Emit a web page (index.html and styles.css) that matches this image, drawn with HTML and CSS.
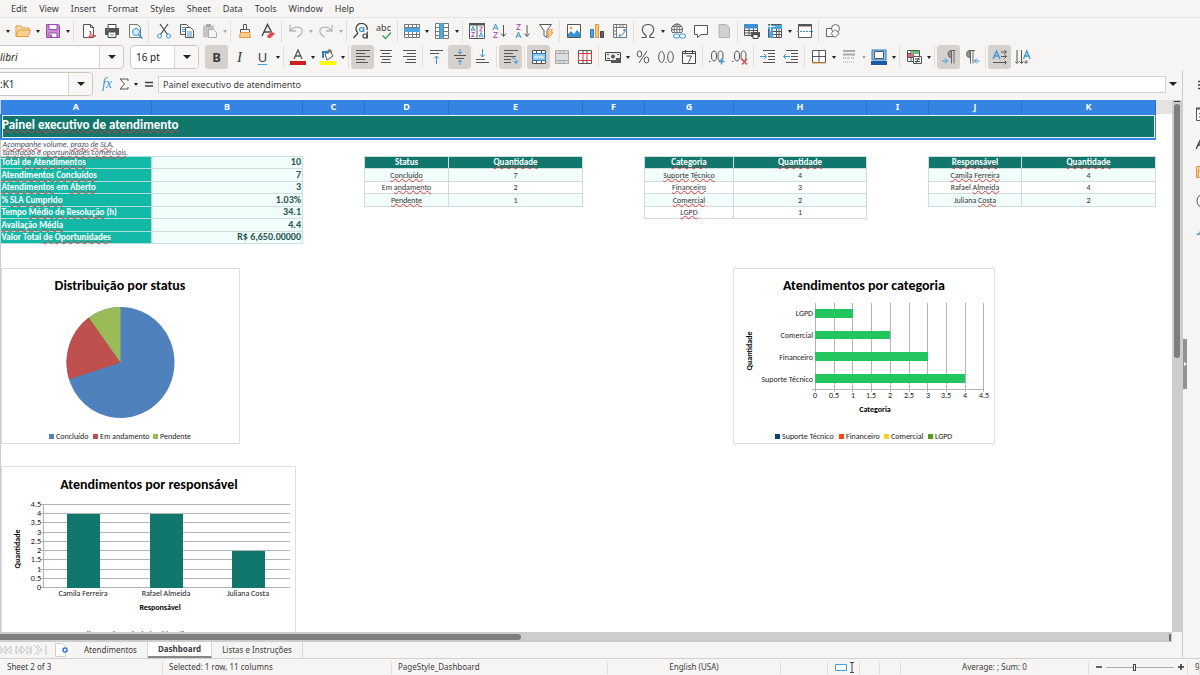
FILE: index.html
```html
<!DOCTYPE html>
<html lang="pt-BR">
<head>
<meta charset="utf-8">
<title>Dashboard</title>
<link rel="stylesheet" href="styles.css">
</head>
<body>
<div class="app">
<nav class="menubar">
<button>Edit</button><button>View</button><button>Insert</button><button>Format</button><button>Styles</button><button>Sheet</button><button>Data</button><button>Tools</button><button>Window</button><button>Help</button>
</nav>

<div class="toolbar standard">
<button class="drop" aria-label="New options"></button>
<button class="tool" aria-label="Open"><svg viewBox="0 0 16 16"><path d="M1 13V3h5l2 2h6v2" fill="#fde0b0" stroke="#e8973c"/><path d="M1 13.500l2.500-6.500h12L13 13.500z" fill="#fbd08f" stroke="#e8973c"/></svg></button>
<button class="drop" aria-label="Open options"></button>
<button class="tool" aria-label="Save"><svg viewBox="0 0 16 16"><path d="M1.500 1.500h12l1 1v12h-13z" fill="#cd8bd8" stroke="#9a4aaa"/><path d="M4 1.500h8v5H4zM4 10h8v4.500H4z" fill="#fff" stroke="#9a4aaa"/><path d="M6 11.500v3" stroke="#9a4aaa" stroke-width="2"/></svg></button>
<button class="drop" aria-label="Save options"></button>
<i class="sep"></i>
<button class="tool" aria-label="Export as PDF"><svg viewBox="0 0 16 16"><path d="M2.500 1.500h7l3 3v10h-10zM9.500 1.500v3h3" fill="#fff" stroke="#555"/><path d="M7 15c3-3 3-5 2-7 1 4 3 5 6 5-3-.5-6 .5-8 2z" fill="#fff" stroke="#d9393e"/></svg></button>
<button class="tool" aria-label="Print"><svg viewBox="0 0 16 16"><path d="M4 5V1.500h8V5" fill="#fff" stroke="#444"/><path d="M1 5h14v7H1z" fill="#555"/><path d="M4 9h8v5.500H4z" fill="#fff" stroke="#444"/><path d="M3 7h2M6 12h4" stroke="#48a0d8"/></svg></button>
<button class="tool" aria-label="Print preview"><svg viewBox="0 0 16 16"><path d="M2.500 1.500h8l3 3v10h-11z" fill="#fff" stroke="#777"/><circle cx="9" cy="9" r="3.500" fill="#d8ecfa" stroke="#3a94d4"/><path d="M11.500 11.500l4 4" stroke="#3a94d4" stroke-width="1.500"/></svg></button>
<i class="sep"></i>
<button class="tool" aria-label="Cut"><svg viewBox="0 0 16 16"><path d="M4 1l7.500 10.500M12 1L4.500 11.500" stroke="#444" fill="none" stroke-width="1.200"/><circle cx="3.500" cy="13" r="2" fill="none" stroke="#3a94d4"/><circle cx="12.500" cy="13" r="2" fill="none" stroke="#3a94d4"/></svg></button>
<button class="tool" aria-label="Copy"><svg viewBox="0 0 16 16"><path d="M1.500 1.500h6l2 2v8h-8z" fill="#fff" stroke="#555"/><path d="M6.500 4.500h5l3 3v7h-8z" fill="#fff" stroke="#555"/><path d="M3 4.500h3M3 6.500h3M3 8.500h3M8 9h5M8 11h5M8 13h5" stroke="#3a94d4"/></svg></button>
<button class="tool" aria-label="Paste" disabled><svg viewBox="0 0 16 16"><path d="M1 2.500h11v12H1z" fill="#c4c4c4"/><path d="M4 1h5v3H4z" fill="#aaa"/><path d="M6.500 6.500h5l3 3v5h-8z" fill="#f4f4f4" stroke="#aaa"/></svg></button>
<button class="drop faded" aria-label="Paste options" disabled></button>
<i class="sep"></i>
<button class="tool" aria-label="Clone formatting"><svg viewBox="0 0 16 16"><path d="M6.500 1.500h3v5h-3z" fill="#fff" stroke="#555"/><path d="M3.500 6.500h9v3h-9z" fill="#fff" stroke="#555"/><path d="M3.500 9.500h9l1 5h-11z" fill="#fbd08f" stroke="#e8973c"/></svg></button>
<button class="tool" aria-label="Clear formatting"><svg viewBox="0 0 16 16"><path d="M2 13L7.500 1.500 12 10M4 9h6" fill="none" stroke="#444" stroke-width="1.400"/><path d="M7 13l4-4 4 1.500-4.500 4.500H8z" fill="#e2474c"/></svg></button>
<i class="sep"></i>
<button class="tool" aria-label="Undo" disabled><svg viewBox="0 0 16 16"><path d="M2 2v6h6M2.500 7.500C6 3 13 3 14 7c1 3-2 6-5 7" fill="none" stroke="#b8b8b8" stroke-width="1.300"/></svg></button>
<button class="drop faded" aria-label="Undo options" disabled></button>
<button class="tool" aria-label="Redo" disabled><svg viewBox="0 0 16 16"><path d="M14 2v6H8M13.500 7.500C10 3 3 3 2 7c-1 3 2 6 5 7" fill="none" stroke="#b8b8b8" stroke-width="1.300"/></svg></button>
<button class="drop faded" aria-label="Redo options" disabled></button>
<i class="sep"></i>
<button class="tool" aria-label="Find and replace"><svg viewBox="0 0 16 16"><path d="M5 10A5.500 5.500 0 1 1 14 7M5 10l-4.500 5" fill="none" stroke="#444" stroke-width="1.300"/><circle cx="8.500" cy="6.500" r="2" fill="none" stroke="#3a94d4" stroke-width="1.200"/><path d="M10.700 4v5" stroke="#3a94d4" stroke-width="1.200"/><circle cx="12" cy="13" r="2" fill="none" stroke="#444" stroke-width="1.200"/><path d="M14.300 8.500V15.500" stroke="#444" stroke-width="1.200"/></svg></button>
<button class="tool spell" aria-label="Spelling"><span>abc</span><svg viewBox="0 0 16 8"><path d="M6.500 3.500l3 3 5.500-6" fill="none" stroke="#3aa65c" stroke-width="1.400"/></svg></button>
<i class="sep"></i>
<button class="tool" aria-label="Row"><svg viewBox="0 0 16 16"><path d="M.5 1.500h15v13H.5zM.5 4.500h15M.5 8.500h15M.5 11.500h15M4.500 1.500v13M8.500 1.500v13M12.500 1.500v13" fill="#fff" stroke="#777"/><path d="M0 5h16v4H0z" fill="#4ba7e4"/></svg></button>
<button class="drop" aria-label="Row options"></button>
<button class="tool" aria-label="Column"><svg viewBox="0 0 16 16"><path d="M1.500.5h13v15h-13zM1.500 4.500h13M1.500 8.500h13M1.500 12.500h13M5.500.5v15M9.500.5v15" fill="#fff" stroke="#777"/><path d="M5.500 0h4v16h-4z" fill="#4ba7e4"/></svg></button>
<button class="drop" aria-label="Column options"></button>
<i class="sep"></i>
<button class="tool" aria-label="Sort"><svg viewBox="0 0 16 16"><path d="M.5.5h15v15H.5zM8 2v14" fill="#fff" stroke="#555"/><path d="M0 0h16v2.500H0z" fill="#555"/><path d="M2 8l2-4.500L6 8M2.500 7h3M10 14l2-4.500 2 4.500M10.500 13h3" fill="none" stroke="#3a94d4"/><path d="M2.500 9.500h3l-3 4h3M10.500 4h3l-3 4h3" fill="none" stroke="#b04fc0"/></svg></button>
<button class="tool" aria-label="Sort ascending"><svg viewBox="0 0 16 16"><path d="M1 7l2.500-6L6 7M2 5h3" fill="none" stroke="#3a94d4"/><path d="M1.500 9.500h4l-4 5h4" fill="none" stroke="#b04fc0"/><path d="M11.500 2v11M9 10.500l2.500 3 2.500-3" fill="none" stroke="#555"/></svg></button>
<button class="tool" aria-label="Sort descending"><svg viewBox="0 0 16 16"><path d="M1.500 1.500h4l-4 5h4" fill="none" stroke="#b04fc0"/><path d="M1 15l2.500-6L6 15M2 13h3" fill="none" stroke="#3a94d4"/><path d="M12 2v11M9.500 10.500l2.500 3 2.500-3" fill="none" stroke="#555"/></svg></button>
<button class="tool" aria-label="AutoFilter"><svg viewBox="0 0 16 16"><path d="M1.500 1.500h12l-4.500 6v7l-3-2v-5z" fill="#fff" stroke="#555"/><path d="M11.500 6.500h3l-1.500 3h2l-5 6 1-4.500H9z" fill="#fbd08f" stroke="#e8973c" stroke-width=".8"/></svg></button>
<i class="sep"></i>
<button class="tool" aria-label="Insert image"><svg viewBox="0 0 16 16"><path d="M1.500 1.500h13v13h-13z" fill="#fff" stroke="#555"/><path d="M2 14V11l3-3 3 3 3-4 3.500 3.500V14z" fill="#3a94d4"/><circle cx="5" cy="5" r="1.300" fill="#f0a040"/></svg></button>
<button class="tool" aria-label="Insert chart"><svg viewBox="0 0 16 16"><path d="M1.500 6.500h3v8h-3z" fill="#4ba7e4" stroke="#2b7fc0"/><path d="M6.500 1.500h3v13h-3z" fill="#fbc678" stroke="#e8973c"/><path d="M11.500 8.500h3v6h-3z" fill="#666" stroke="#444"/></svg></button>
<button class="tool" aria-label="Insert pivot table"><svg viewBox="0 0 16 16"><path d="M1.500 1.500h13v13h-13zM1.500 4.500h13M4.500 1.500v13M8 1.500v3M11 1.500v3M1.500 8h3M1.500 11h3" fill="#fff" stroke="#777"/><path d="M7 12.500c4 0 5.500-2 5.500-6M11 8l1.500-2L14 8M8.500 11L7 12.500 8.500 14" fill="none" stroke="#3a94d4"/></svg></button>
<i class="sep"></i>
<button class="tool" aria-label="Special character"><svg viewBox="0 0 16 16"><path d="M1.500 14.500H6v-2C0 8 2 1.500 8 1.500S16 8 10 12.500v2h4.500" fill="none" stroke="#555" stroke-width="1.200"/></svg></button>
<button class="drop" aria-label="Character options"></button>
<button class="tool" aria-label="Insert hyperlink"><svg viewBox="0 0 16 16"><circle cx="7" cy="6.500" r="5.500" fill="none" stroke="#555"/><path d="M7 1v11M1.500 6.500h11M2.500 3.500h9M2.500 9.500h9" stroke="#777"/><ellipse cx="7" cy="6.500" rx="2.800" ry="5.500" fill="none" stroke="#777"/><path d="M3 10h13v6H3z" fill="#f6f5f4"/><rect x="3.500" y="11" width="6" height="4" rx="2" fill="none" stroke="#3a94d4"/><rect x="9.500" y="11" width="6" height="4" rx="2" fill="none" stroke="#3a94d4"/></svg></button>
<button class="tool" aria-label="Insert comment"><svg viewBox="0 0 16 16"><path d="M1.500 2.500h13v9H8l-3.500 3v-3h-3z" fill="#fff" stroke="#555"/></svg></button>
<button class="tool" aria-label="Headers and footers" disabled><svg viewBox="0 0 16 16"><path d="M3 1.500h7l3.500 3v10H3z" fill="#d0d0d0" stroke="#b4b4b4"/></svg></button>
<i class="sep"></i>
<button class="tool" aria-label="Define print area"><svg viewBox="0 0 16 16"><path d="M.5 1.500h13v11H.5zM.5 7.500h13M.5 10h13M5 1.500v11M9.500 1.500v11" fill="#fff" stroke="#555"/><path d="M0 1h14v4.500H0z" fill="#3a94d4"/><path d="M7 9h9v5H7z" fill="#555"/><path d="M9 11.500h5v4H9z" fill="#fff" stroke="#444"/></svg></button>
<button class="tool" aria-label="Freeze rows and columns"><svg viewBox="0 0 16 16"><path d="M1.500 1.500h13v13h-13zM1.500 8.500h13M1.500 11.500h13M9.500 1.500v13M12 1.500v13" fill="#fff" stroke="#555"/><path d="M1 2h14v4H1zM2 2h4v13H2z" fill="#4ba7e4"/><path d="M0 3.500h8M3.500 0v8" stroke="#fff" stroke-width=".8"/></svg></button>
<button class="drop" aria-label="Freeze options"></button>
<button class="tool" aria-label="Split window"><svg viewBox="0 0 16 16"><path d="M1.500 1.500h13v13h-13z" fill="#fff" stroke="#555"/><path d="M1 1h14v2.500H1z" fill="#555"/><path d="M0 8.500h16" stroke="#3a94d4" stroke-dasharray="2 1"/></svg></button>
<i class="sep"></i>
<button class="tool" aria-label="Show draw functions"><svg viewBox="0 0 16 16"><path d="M1.500 5.500h8v8h-8z" fill="#fff" stroke="#666"/><circle cx="10.500" cy="5.500" r="4" fill="#fff" stroke="#666"/><path d="M10 6.500l4 4-4 4-4-4z" fill="#fff" stroke="#666"/></svg></button>
</div>

<div class="toolbar formatting">
<div class="combo font"><input aria-label="Font name" value="libri"><button aria-label="Choose font"></button></div>
<div class="combo size"><input aria-label="Font size" value="16 pt"><button aria-label="Choose size"></button></div>
<button class="tool on" aria-label="Bold"><b>B</b></button>
<button class="tool italic" aria-label="Italic"><i>I</i></button>
<button class="tool" aria-label="Underline"><u>U</u></button>
<button class="drop" aria-label="Underline options"></button>
<i class="sep"></i>
<button class="tool" aria-label="Font color"><svg viewBox="0 0 16 16"><path d="M4 10l4-9 4 9M5.500 7h5" fill="none" stroke="#555" stroke-width="1.300"/><path d="M0 12h16v4H0z" fill="#c9211e"/></svg></button>
<button class="drop" aria-label="Font color options"></button>
<button class="tool" aria-label="Highlighting"><svg viewBox="0 0 16 16"><path d="M5 5l5-3 3 5-6 4z" fill="#fff" stroke="#555"/><path d="M8 5V1h3v3" fill="none" stroke="#555"/><path d="M3 9V3h4" fill="none" stroke="#2b7fc0" stroke-width="2"/><path d="M0 12h16v4H0z" fill="#ffff00"/></svg></button>
<button class="drop" aria-label="Highlighting options"></button>
<i class="sep"></i>
<button class="tool on" aria-label="Align left"><svg viewBox="0 0 16 16"><path d="M1 1.500h14M1 4.500h9M1 7.500h14M1 10.500h9M1 13.500h12" stroke="#555"/></svg></button>
<button class="tool" aria-label="Center"><svg viewBox="0 0 16 16"><path d="M2 1.500h12M4 4.500h8M2 7.500h12M4 10.500h8M3 13.500h10" stroke="#555"/></svg></button>
<button class="tool" aria-label="Align right"><svg viewBox="0 0 16 16"><path d="M2 1.500h13M6 4.500h9M2 7.500h13M6 10.500h9M4 13.500h11" stroke="#555"/></svg></button>
<i class="sep"></i>
<button class="tool" aria-label="Align top"><svg viewBox="0 0 16 16"><path d="M1 1.500h13M1 4.500h9" stroke="#555"/><path d="M7.500 15V7M5 9.500L7.500 7l2.500 2.500" fill="none" stroke="#3a94d4"/></svg></button>
<button class="tool on" aria-label="Center vertically"><svg viewBox="0 0 16 16"><path d="M2 6.500h12M4 9.500h8" stroke="#555"/><path d="M8 0v5M6 3l2 2 2-2M8 16v-5M6 13l2-2 2 2" fill="none" stroke="#3a94d4"/></svg></button>
<button class="tool" aria-label="Align bottom"><svg viewBox="0 0 16 16"><path d="M1 10.500h9M1 13.500h13" stroke="#555"/><path d="M7.500 0v8M5 5.500L7.500 8 10 5.500" fill="none" stroke="#3a94d4"/></svg></button>
<i class="sep"></i>
<button class="tool on" aria-label="Wrap text"><svg viewBox="0 0 16 16"><path d="M1 1.500h14M1 4.500h9M1 7.500h12M1 10.500h7M1 13.500h7" stroke="#555"/><path d="M9 9c3 0 4 1 4 5M10.500 12l2.500 2.500 2-3" fill="none" stroke="#3a94d4"/></svg></button>
<i class="sep"></i>
<button class="tool on" aria-label="Merge and center"><svg viewBox="0 0 16 16"><path d="M1.500 1.500h13v13h-13zM1.500 4.500h13M1.500 11.500h13M5.500 1.500v3M10.500 1.500v3M5.500 11.500v3M10.500 11.500v3" fill="#fff" stroke="#555"/><path d="M1.500 4.500h13v7h-13z" fill="#8cc8f0" stroke="#2b7fc0"/><path d="M3.500 8h9M5.500 6.500L4 8l1.500 1.500M10.500 6.500L12 8l-1.500 1.500" fill="none" stroke="#fff"/></svg></button>
<button class="tool" aria-label="Merge cells" disabled><svg viewBox="0 0 16 16"><path d="M1.500 1.500h13v13h-13zM1.500 4.500h13M1.500 11.500h13M6 1.500v3M10 1.500v3M6 11.500v3M10 11.500v3" fill="#ddd" stroke="#aaa"/></svg></button>
<button class="tool" aria-label="Unmerge cells"><svg viewBox="0 0 16 16"><path d="M1.500 1.500h13v13h-13zM1.500 4.500h13M1.500 11.500h13M6 1.500v3M10 1.500v3M6 11.500v3M10 11.500v3" fill="#fff" stroke="#555"/><path d="M1.500 4.500h13v7h-13zM6 4.500v7M10 4.500v7" fill="#fff" stroke="#d9393e"/></svg></button>
<i class="sep"></i>
<button class="tool" aria-label="Format as currency"><svg viewBox="0 0 16 16"><path d="M.5 3.500h15v8H.5z" fill="#eee" stroke="#444"/><circle cx="8" cy="7.500" r="2" fill="#555"/><path d="M2 5.500h2M12 5.500h2M2 9.500h3" stroke="#555"/><path d="M6 11h5v3H6zM11 9h5v5h-5z" fill="#555"/></svg></button>
<button class="drop" aria-label="Currency options"></button>
<button class="tool" aria-label="Format as percent"><svg viewBox="0 0 16 16"><ellipse cx="4.500" cy="5" rx="2.300" ry="3" fill="none" stroke="#555"/><ellipse cx="11.500" cy="11" rx="2.300" ry="3" fill="none" stroke="#555"/><path d="M12 2L4 14" stroke="#555"/></svg></button>
<button class="tool" aria-label="Format as number"><svg viewBox="0 0 16 16"><ellipse cx="3.500" cy="8" rx="2.800" ry="5.500" fill="none" stroke="#555"/><ellipse cx="12.500" cy="8" rx="2.800" ry="5.500" fill="none" stroke="#555"/><path d="M7.500 13.500h1" stroke="#555"/></svg></button>
<button class="tool" aria-label="Format as date"><svg viewBox="0 0 16 16"><path d="M1.500 2.500h13v12h-13z" fill="#fff" stroke="#444"/><path d="M1.500 4.500h13M4.500 1v3M11.500 1v3" stroke="#444"/><path d="M5.500 7h5l-3 6.500" fill="none" stroke="#444"/></svg></button>
<i class="sep"></i>
<button class="tool" aria-label="Add decimal place"><svg viewBox="0 0 16 16"><ellipse cx="5" cy="7" rx="2.500" ry="5" fill="none" stroke="#555"/><ellipse cx="11.500" cy="7" rx="2.500" ry="5" fill="none" stroke="#555"/><path d="M0 12.500h1.500" stroke="#555"/><path d="M9.500 12.500h6M12.500 9.500v6" stroke="#3a94d4" stroke-width="1.300"/></svg></button>
<button class="tool" aria-label="Delete decimal place"><svg viewBox="0 0 16 16"><ellipse cx="5" cy="7" rx="2.500" ry="5" fill="none" stroke="#555"/><ellipse cx="11.500" cy="7" rx="2.500" ry="5" fill="none" stroke="#555"/><path d="M0 12.500h1.500" stroke="#555"/><path d="M10 10l5 5.500M15 10l-5 5.500" stroke="#e2474c" stroke-width="1.300"/></svg></button>
<i class="sep"></i>
<button class="tool" aria-label="Increase indent"><svg viewBox="0 0 16 16"><path d="M3 1.500h12M8 4.500h7M8 7.500h7M8 10.500h7M3 13.500h12" stroke="#555"/><path d="M0 7.500h6M4 5l2.500 2.500L4 10" fill="none" stroke="#3a94d4"/></svg></button>
<button class="tool" aria-label="Decrease indent"><svg viewBox="0 0 16 16"><path d="M3 1.500h12M8 4.500h7M8 7.500h7M8 10.500h7M3 13.500h12" stroke="#555"/><path d="M1 7.500h6M3 5L.5 7.500 3 10" fill="none" stroke="#3a94d4"/></svg></button>
<i class="sep"></i>
<button class="tool" aria-label="Borders"><svg viewBox="0 0 16 16"><path d="M1.500 1.500h13v12h-13zM8 1.500v12M1.500 7.500h13" fill="#fff" stroke="#555"/><path d="M1 14h14" stroke="#e8973c"/></svg></button>
<button class="drop" aria-label="Border options"></button>
<button class="tool" aria-label="Border style" disabled><svg viewBox="0 0 16 16"><path d="M2 2h12M2 5.500h12" stroke="#aaa" stroke-width="2"/><path d="M2 9h12" stroke="#aaa" stroke-dasharray="3 1"/><path d="M2 13h12" stroke="#aaa" stroke-dasharray="1 1"/></svg></button>
<button class="drop faded" aria-label="Border style options" disabled></button>
<button class="tool" aria-label="Border color"><svg viewBox="0 0 16 16"><path d="M1 1h14v10H1z" fill="#8cc8f0" stroke="#2b7fc0"/><path d="M3.500 2.500h9v7h-9z" fill="#fff" stroke="#555"/><path d="M0 12h16v4H0z" fill="#1c5aa8"/></svg></button>
<button class="drop" aria-label="Border color options"></button>
<i class="sep"></i>
<button class="tool" aria-label="Conditional formatting"><svg viewBox="0 0 16 16"><path d="M1.500 1.500h12v11h-12zM1.500 4.500h12M1.500 8.500h12M5 1.500v11" fill="#fff" stroke="#555"/><path d="M5 2h8v3H5z" fill="#6cc07c"/><path d="M2 5h6v3H2z" fill="#e2676a"/><path d="M7.500 7.500h8v7h-8z" fill="#fff" stroke="#555"/><path d="M9 10h5M9 12.500h5M13 8.500L10 14" stroke="#444"/></svg></button>
<button class="drop" aria-label="Conditional options"></button>
<i class="sep"></i>
<button class="tool on" aria-label="Left-to-right"><svg viewBox="0 0 16 16"><path d="M14.500 1.500H9M10.500 1.500v13M13 1.500v13" stroke="#666"/><path d="M10.500 1.500a3.500 3.500 0 0 0 0 7z" fill="#999" stroke="#666"/><path d="M1 12h5M4 9.500L6.500 12 4 14.500" fill="none" stroke="#3a94d4"/></svg></button>
<button class="tool" aria-label="Right-to-left"><svg viewBox="0 0 16 16"><path d="M11 1.500H5M6.500 1.500v13M9 1.500v13" stroke="#666"/><path d="M6 1.500a3.500 3.500 0 0 0 0 7z" fill="#999" stroke="#666"/><path d="M10.500 12h5M13 9.500L10.500 12l2.500 2.500" fill="none" stroke="#3a94d4"/></svg></button>
<i class="sep"></i>
<button class="tool on" aria-label="Text direction left to right"><svg viewBox="0 0 16 16"><path d="M1 10l3.500-8L8 10M2 7h5" fill="none" stroke="#3a94d4" stroke-width="1.300"/><path d="M9 3h5M9 7.500h5M1 13.500h13M12.500 1l2 2-2 2M12.500 5.500l2 2-2 2M12.500 11.500l2 2-2 2" fill="none" stroke="#555"/></svg></button>
<button class="tool" aria-label="Text direction top to bottom"><svg viewBox="0 0 16 16"><path d="M8.500 10l3.300-8 3.300 8M9.500 7h5" fill="none" stroke="#3a94d4" stroke-width="1.300"/><path d="M2 1v13M6.500 1v13M11 11v3M0 12.500l2 2 2-2M4.500 12.500l2 2 2-2M9 12.500l2 2 2-2" fill="none" stroke="#555"/></svg></button>
</div>

<div class="workspace">
<main class="document">
<div class="formulabar">
<div class="combo name"><input aria-label="Name box" value=":K1"><button aria-label="Choose name"></button></div>
<button class="fx" aria-label="Function wizard"><i>fx</i></button>
<button class="sigma" aria-label="Select function"><svg viewBox="0 0 12 12"><path d="M10 3V1H2l4.500 5L2 11h8V9" fill="none" stroke="#555"/></svg></button>
<button class="drop" aria-label="Function options"></button>
<button class="equals" aria-label="Formula"><svg viewBox="0 0 12 12"><path d="M2 4.500h8M2 8h8" stroke="#444" stroke-width="1.500"/></svg></button>
<input class="formula" aria-label="Input line" value="Painel executivo de atendimento">
<button class="expand" aria-label="Expand formula bar"></button>
</div>

<div class="viewport">
<div class="sheet">
<table class="grid">
<colgroup><col class="w151"><col class="w151"><col class="w62"><col class="w84"><col class="w134"><col class="w62"><col class="w89"><col class="w133"><col class="w62"><col class="w93"><col class="w134"></colgroup>
<thead><tr><th>A</th><th>B</th><th>C</th><th>D</th><th>E</th><th>F</th><th>G</th><th>H</th><th>I</th><th>J</th><th>K</th></tr></thead>
<tbody>
<tr class="title"><td colspan="11"><s>Painel executivo de atendimento</s></td></tr>
<tr class="note"><td><s>Acompanhe</s> volume, <s>prazo</s> <s>de</s> <s>SLA</s>,<br><s>satisfação</s> e <s>oportunidades</s> <s>comerciais</s>.</td><td colspan="10"></td></tr>
<tr><td class="kpi">Total <s>de</s> <s>Atendimentos</s></td><td class="val">10</td><td></td><td class="head">Status</td><td class="head"><s>Quantidade</s></td><td></td><td class="head"><s>Categoria</s></td><td class="head"><s>Quantidade</s></td><td></td><td class="head"><s>Responsável</s></td><td class="head"><s>Quantidade</s></td></tr>
<tr><td class="kpi"><s>Atendimentos</s> <s>Concluídos</s></td><td class="val">7</td><td></td><td class="cell tint"><s>Concluído</s></td><td class="cell tint">7</td><td></td><td class="cell tint"><s>Suporte</s> <s>Técnico</s></td><td class="cell tint">4</td><td></td><td class="cell tint"><s>Camila</s> <s>Ferreira</s></td><td class="cell tint">4</td></tr>
<tr><td class="kpi"><s>Atendimentos</s> em <s>Aberto</s></td><td class="val">3</td><td></td><td class="cell">Em <s>andamento</s></td><td class="cell">2</td><td></td><td class="cell"><s>Financeiro</s></td><td class="cell">3</td><td></td><td class="cell">Rafael <s>Almeida</s></td><td class="cell">4</td></tr>
<tr><td class="kpi">% <s>SLA</s> <s>Cumprido</s></td><td class="val">1.03%</td><td></td><td class="cell tint"><s>Pendente</s></td><td class="cell tint">1</td><td></td><td class="cell tint"><s>Comercial</s></td><td class="cell tint">2</td><td></td><td class="cell tint">Juliana <s>Costa</s></td><td class="cell tint">2</td></tr>
<tr><td class="kpi">Tempo <s>Médio</s> <s>de</s> <s>Resolução</s> (h)</td><td class="val">34.1</td><td colspan="4"></td><td class="cell"><s>LGPD</s></td><td class="cell">1</td><td colspan="3"></td></tr>
<tr><td class="kpi"><s>Avaliação</s> <s>Média</s></td><td class="val">4.4</td><td colspan="9"></td></tr>
<tr><td class="kpi">Valor Total <s>de</s> <s>Oportunidades</s></td><td class="val">R$ 6,650.00000</td><td colspan="9"></td></tr>
</tbody>
</table>

<svg class="chart status" width="239" height="176" viewBox="0 0 239 176" role="img" aria-label="Distribuição por status">
<rect class="frame" x=".5" y=".5" width="238" height="175"/>
<text class="heading" x="119" y="22">Distribuição por status</text>
<ellipse cx="119.500" cy="94.500" rx="54" ry="55.500" fill="#4f81bd"/>
<path d="M119.500 94.500L68.100 111.600A54 55.500 0 0 1 87.800 49.600z" fill="#c0504d"/>
<path d="M119.500 94.500L87.800 49.600A54 55.500 0 0 1 119.500 39z" fill="#9bbb59"/>
<path d="M48 166h5v5h-5z" fill="#4f81bd"/><text x="55" y="171">Concluído</text>
<path d="M92 166h5v5h-5z" fill="#c0504d"/><text x="99" y="171">Em andamento</text>
<path d="M152 166h5v5h-5z" fill="#9bbb59"/><text x="159" y="171">Pendente</text>
</svg>

<svg class="chart category" width="262" height="176" viewBox="0 0 262 176" role="img" aria-label="Atendimentos por categoria">
<rect class="frame" x=".5" y=".5" width="261" height="175"/>
<text class="heading" x="131" y="22">Atendimentos por categoria</text>
<path class="rule" d="M82.500 35v89M101.500 35v89M119.500 35v89M138.500 35v89M157.500 35v89M176.500 35v89M194.500 35v89M213.500 35v89M232.500 35v89M250.500 35v89M79 121.500h172"/>
<path d="M82 41h38v9H82zM82 63h75v8H82zM82 84h113v9H82zM82 106h150v9H82z" fill="#22c55e"/>
<g class="end"><text x="80" y="48">LGPD</text><text x="80" y="70">Comercial</text><text x="80" y="92">Financeiro</text><text x="80" y="114">Suporte Técnico</text></g>
<g class="mid"><text x="82" y="130">0</text><text x="101" y="130">0.5</text><text x="120" y="130">1</text><text x="138" y="130">1.5</text><text x="157" y="130">2</text><text x="176" y="130">2.5</text><text x="195" y="130">3</text><text x="213" y="130">3.5</text><text x="232" y="130">4</text><text x="251" y="130">4.5</text></g>
<text class="axis" x="142" y="144">Categoria</text>
<text class="axis" transform="translate(19 83) rotate(-90)">Quantidade</text>
<path d="M42 166h5v5h-5z" fill="#004586"/><text x="49" y="171">Suporte Técnico</text>
<path d="M106 166h5v5h-5z" fill="#ff420e"/><text x="113" y="171">Financeiro</text>
<path d="M151 166h5v5h-5z" fill="#ffd320"/><text x="158" y="171">Comercial</text>
<path d="M195 166h5v5h-5z" fill="#579d1c"/><text x="202" y="171">LGPD</text>
</svg>

<svg class="chart owner" width="296" height="190" viewBox="0 0 296 190" role="img" aria-label="Atendimentos por responsável">
<rect class="frame" x=".5" y=".5" width="294" height="189"/>
<text class="heading" x="148" y="23">Atendimentos por responsável</text>
<path class="rule" d="M39 38.500h250M39 47.500h250M39 56.500h250M39 66.500h250M39 75.500h250M39 84.500h250M39 93.500h250M39 103.500h250M39 112.500h250M39 121.500h250M42.500 38v83"/>
<path d="M66 48h33v74H66zM149 48h33v74h-33zM231 85h33v37h-33z" fill="#11776d"/>
<g class="end"><text x="40" y="41">4.5</text><text x="40" y="50">4</text><text x="40" y="59">3.5</text><text x="40" y="69">3</text><text x="40" y="78">2.5</text><text x="40" y="87">2</text><text x="40" y="96">1.5</text><text x="40" y="106">1</text><text x="40" y="115">0.5</text><text x="40" y="124">0</text></g>
<g class="mid"><text x="82" y="130">Camila Ferreira</text><text x="165" y="130">Rafael Almeida</text><text x="247" y="130">Juliana Costa</text></g>
<text class="axis" x="159" y="144">Responsável</text>
<text class="axis" transform="translate(19 83) rotate(-90)">Quantidade</text>
<g class="mid"><text x="143" y="171">Camila Ferreira  Rafael Almeida  Juliana Costa</text></g>
</svg>
</div>
<div class="vscroll"><div class="vthumb"></div></div>
</div>
<div class="hscroll"><div class="hthumb"></div><div class="hend"></div></div>
<div class="tabs">
<svg class="nav" viewBox="0 0 50 12"><path d="M1 2v8M6 2L2 6l4 4zM11 2L7 6l4 4zM16 2l4 4-4 4zM21 2l4 4-4 4zM27 2l4 4-4 4zM31 2v8M34 1l5 5-5 5M37 1l5 5-5 5M46 1v10" fill="none" stroke="#c8c6c4"/></svg>
<button class="add" aria-label="Add sheet"><svg viewBox="0 0 14 14"><path d="M.5.500h7l3 3v10H.5z" fill="#fff" stroke="#d0d0d0"/><circle cx="10" cy="7" r="2" fill="#fff" stroke="#2f78c8" stroke-width="1.500"/></svg></button>
<button class="tab">Atendimentos</button><button class="tab current">Dashboard</button><button class="tab">Listas e Instruções</button>
</div>
</main>
<aside class="sidebar">
<button class="handle" aria-label="Hide sidebar"></button>
<button aria-label="Settings"><svg viewBox="0 0 16 16"><path d="M2 4.500h14M2 8h14M2 11.500h14" stroke="#444" stroke-width="1.500"/></svg></button>
<button aria-label="Properties"><svg viewBox="0 0 16 16"><path d="M.5 2.500h15v12H.5zM3 7.500h10M3 11h10" fill="#fff" stroke="#555"/><path d="M0 1.500h16v2H0z" fill="#555"/></svg></button>
<button aria-label="Styles"><svg viewBox="0 0 16 16"><path d="M0 14L6 2l6 12M2 10h8" fill="none" stroke="#444" stroke-width="1.500"/></svg></button>
<button aria-label="Gallery"><svg viewBox="0 0 16 16"><path d="M.5 2.500h15v11H.5z" fill="#fbd08f" stroke="#e8973c"/><path d="M2.500 6.500h12v7h-12z" fill="#fff" stroke="#e8973c"/></svg></button>
<button aria-label="Navigator"><svg viewBox="0 0 16 16"><circle cx="8" cy="8" r="7" fill="#fff" stroke="#555"/><path d="M4 12l3-5 5-3-3 5z" fill="none" stroke="#555"/></svg></button>
<button aria-label="Functions"><svg viewBox="0 0 16 16"><path d="M1 12c3 1 3-1 4-4" fill="none" stroke="#3a94d4" stroke-width="1.500"/></svg></button>
</aside>
</div>

<footer class="statusbar">
<span class="count">Sheet 2 of 3</span><span class="selection">Selected: 1 row, 11 columns</span><span class="page">PageStyle_Dashboard</span><span class="lang">English (USA)</span><span class="insert"></span>
<span class="mode"><svg viewBox="0 0 22 12"><path d="M1.500 3.500h11v6h-11z" fill="#fff" stroke="#48a0d0"/><path d="M16 1.500h4M18 1.500v10M16 11.500h4" stroke="#444"/></svg></span><span class="sign"></span><span class="blank"></span>
<span class="sum">Average: ; Sum: 0</span>
<span class="zoom"><button aria-label="Zoom out"><svg viewBox="0 0 8 8"><path d="M1 4h6" stroke="#333" stroke-width="1.500"/></svg></button><input type="range" aria-label="Zoom" min="0" max="100" value="42"><button aria-label="Zoom in"><svg viewBox="0 0 8 8"><path d="M1 4h6M4 1v6" stroke="#333" stroke-width="1.500"/></svg></button></span>
<span class="percent">9</span>
</footer>
</div>
</body>
</html>
```
FILE: styles.css
```css
* { box-sizing: border-box; }
body { margin: 0; background: #f6f5f4; color: #3c3c3c; font: 9px/12px "Noto Sans", "Open Sans", sans-serif; }
button, input { margin: 0; padding: 0; border: 0; background: none; color: inherit; font: inherit; }
button { display: flex; flex: none; align-items: center; justify-content: center; }
svg { display: block; flex: none; }
.app { display: flex; flex-direction: column; height: 100vh; overflow: hidden; }

.menubar { display: flex; flex: none; height: 18px; padding-left: 11px; gap: 12px; border-bottom: 1px solid #e6e4e2; }

.toolbar { display: flex; flex: none; align-items: center; }
.standard { height: 26px; padding-left: 4px; }
.formatting { height: 26px; }
.tool { width: 23px; height: 24px; border-radius: 3px; font-size: 13px; }
.tool svg { width: 16px; height: 16px; }
.tool.on { background: #d5d1cd; }
.tool u { text-decoration-color: #48a0d8; text-underline-offset: 2px; }
.italic { font-family: "Liberation Serif", serif; font-size: 15px; }
.tool.spell { flex-direction: column; font-size: 9px; line-height: 9px; }
.spell svg { height: 8px; }
.sep { flex: none; width: 1px; height: 22px; margin: 0 2px; background: #e2e0de; }
.drop { width: 7px; height: 16px; }
.drop::before, .combo button::before, .expand::before { content: ""; border: 3px solid transparent; border-top: 3px solid #222; border-bottom: 0; }
.drop::before { border-left-width: 2px; border-right-width: 2px; }
.faded { opacity: .35; }
.standard .sep:nth-of-type(-n+2) { margin-right: 3px; }

.combo { display: flex; flex: none; height: 24px; border: 1px solid #cdc7c2; border-radius: 0 4px 4px 0; background: #fff; font-size: 10px; }
.combo input { flex: 1; min-width: 0; color: #222; }
.combo button { width: 24px; border-left: 1px solid #d8d4d0; border-radius: 0 3px 3px 0; background: #f8f7f6; }
.combo button::before { border-width: 4px 4px 0; }
.font { width: 124px; border-left: 0; font-style: italic; }
.size { width: 69px; margin: 0 6px; border-radius: 4px; }
.size input { padding-left: 5px; }

.workspace { display: flex; flex: 1; min-height: 0; }
.document { display: flex; flex: 1; flex-direction: column; min-width: 0; }
.formulabar { display: flex; flex: none; align-items: center; height: 30px; padding: 0 5px 2px 0; }
.name { width: 93px; border-left: 0; }
.fx { width: 18px; margin-left: 5px; color: #3a94d4; font: 14px "Liberation Serif", serif; }
.sigma { width: 16px; }
.sigma svg, .equals svg { width: 12px; height: 12px; }
.equals { width: 19px; }
.formula { flex: 1; height: 17px; padding-left: 4px; border: 1px solid #d5d0cc; background: #fff; }
.expand { width: 9px; margin-left: 2px; }
.expand::before { border-width: 4px 4px 0; }

.viewport { display: flex; flex: 1; min-height: 0; }
.sheet { position: relative; flex: 1; overflow: hidden; background: linear-gradient(90deg, #ccc 1px, transparent 1px), linear-gradient(#e4e3e2 14px, #fff 14px); font-family: Carlito, Lato, sans-serif; font-size: 8px; }
.grid { width: 1155px; border-collapse: collapse; table-layout: fixed; line-height: 10px; }
.w62 { width: 62px; } .w84 { width: 84px; } .w89 { width: 89px; } .w93 { width: 93px; }
.w133 { width: 133px; } .w134 { width: 134px; } .w151 { width: 151px; }
.grid th, .grid td { height: 12px; padding: 0; white-space: nowrap; }
.grid td { padding-bottom: 1px; }
.grid tr:nth-child(even) td { height: 13px; }
.grid th { height: 14px; border-right: 1px solid #2f72c4; background: #3584e4; color: #fff; font: bold 9px/13px "Noto Sans", sans-serif; }
.grid .title td { height: 25px; padding: 0 0 2px 1px; border: 1px solid #3584e4; border-bottom-width: 2px; outline: 1px solid #e4f2f4; outline-offset: -2px; background: #11776d; color: #fff; font-size: 13px; font-weight: bold; }
.grid .note td { height: 16px; padding: 0 0 0 2px; color: #475569; font-style: italic; line-height: 8px; vertical-align: top; }
.grid s { text-decoration: underline wavy #e03a3a 1px; text-decoration-skip-ink: none; text-underline-offset: 0; }
.grid .kpi { padding-left: 1px; border: 1px solid #b4dcd6; border-left: 0; background: #14b8a6; color: #fff; font-size: 9px; font-weight: bold; }
.grid .val { padding-right: 1px; border: 1px solid #cfe0dc; background: #f0fdfa; color: #26554f; font-size: 10px; font-weight: bold; text-align: right; }
.grid .head { border: 1px solid #cfe0dc; background: #11776d; color: #fff; font-size: 9px; font-weight: bold; text-align: center; }
.grid .cell { border: 1px solid #d4dcdb; color: #333; text-align: center; }
.grid .tint { background: #f0fdfa; }

.chart { position: absolute; font-size: 8px; fill: #222; }
.status { left: 1px; top: 168px; }
.category { left: 733px; top: 168px; }
.owner { left: 1px; top: 366px; }
.frame { fill: #fff; stroke: #dfdfdf; }
.heading { font-size: 14px; font-weight: bold; text-anchor: middle; fill: #000; }
.axis { font-weight: bold; text-anchor: middle; fill: #000; }
.rule { fill: none; stroke: #b3b3b3; }
.end { text-anchor: end; }
.mid { text-anchor: middle; }

.vscroll { flex: none; width: 10px; padding: 1px 2px; background: #cdcdcd; }
.vscroll::before { content: ""; display: block; height: 1px; margin-bottom: 2px; background: #333; }
.vthumb { height: 48%; border-radius: 3px; background: #7e7e7e; }
.hscroll { display: flex; flex: none; justify-content: space-between; align-items: center; height: 10px; margin-right: 10px; padding-right: 1px; background: #cdcdcd; }
.hthumb { width: 44.500%; height: 6px; border-radius: 0 3px 3px 0; background: #7e7e7e; }
.hend { width: 2px; height: 7px; background: #6c6c6c; }
.tabs { display: flex; flex: none; height: 16px; font-size: 8px; }
.nav { width: 50px; height: 12px; margin-top: 2px; }
.add { width: 24px; }
.add svg { width: 14px; height: 14px; }
.tab { padding: 0 10px; border-right: 1px solid #dad8d6; }
.tab.current { border-bottom: 2px solid #8a8886; background: #fff; font-weight: bold; }

.sidebar { position: relative; display: flex; flex: none; flex-direction: column; align-items: flex-start; width: 18px; padding: 7px 0 0 13px; gap: 13px; overflow: hidden; border-left: 1px solid #cfcdcb; }
.sidebar svg { width: 16px; height: 16px; }
.sidebar .handle { position: absolute; left: 0; top: 269px; width: 4px; height: 50px; background: #929292; }
.handle::before { content: ""; border: 2px solid transparent; border-left: 3px solid #fff; border-right: 0; }

.statusbar { display: flex; flex: none; align-items: center; height: 17px; border-top: 1px solid #d2d0ce; font-size: 8px; white-space: nowrap; overflow: hidden; }
.statusbar > span { flex: none; height: 13px; border-right: 1px solid #e0dedc; }
.count { width: 163px; padding-left: 7px; }
.selection { width: 229px; padding-left: 6px; }
.page { width: 216px; padding-left: 6px; }
.lang { width: 173px; text-align: center; }
.insert { width: 47px; }
.mode { width: 32px; padding-left: 6px; }
.mode svg { width: 22px; height: 12px; }
.sign { width: 20px; } .blank { width: 21px; }
.statusbar .sum { flex: 1; text-align: center; }
.zoom { display: flex; align-items: center; width: 99px; padding-left: 6px; gap: 3px; }
.zoom svg { width: 8px; height: 8px; }
.zoom input { width: 68px; height: 9px; appearance: none; background: linear-gradient(#aaa, #aaa) center / 100% 1px no-repeat; }
.zoom input::-webkit-slider-thumb { appearance: none; width: 3px; height: 7px; border: 1px solid #444; background: #fff; }
.percent { width: 12px; padding-left: 7px; overflow: hidden; }
```
